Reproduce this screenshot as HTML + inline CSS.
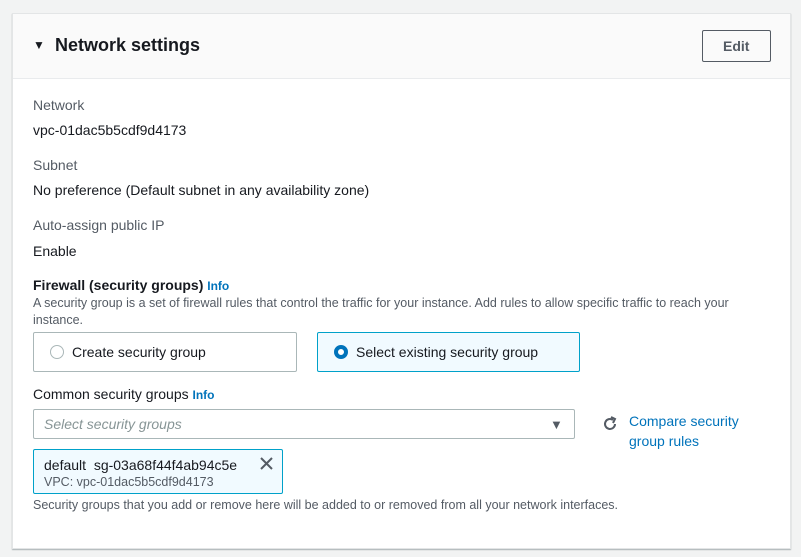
<!DOCTYPE html>
<html><head><style>
body{margin:0;width:801px;height:557px;background:#f2f3f3;font-family:"Liberation Sans",sans-serif;color:#16191f;position:relative;overflow:hidden}
.card{position:absolute;left:12px;top:13px;width:777px;height:534px;background:#fff;border:1px solid #e3e5e6;box-shadow:0 1px 1px rgba(0,28,36,.3)}
.hdr{position:absolute;left:0;top:0;width:777px;height:64px;background:#fafafa;border-bottom:1px solid #e9ebed}
.t{position:absolute;white-space:nowrap;font-size:14px;line-height:16px}
.lbl{color:#545b64}
.s{font-size:12.5px;color:#545b64;line-height:14px}
.info{color:#0073bb;font-weight:bold;font-size:12px}
.box{position:absolute;border:1px solid #aab7b8;border-radius:2px;box-sizing:border-box}
</style></head><body>
<div class="card">
<div class="hdr">
<div class="t" style="left:20px;top:23px;font-size:12px">&#9660;</div>
<div class="t" style="left:42px;top:21px;font-size:18px;font-weight:bold;line-height:20px">Network settings</div>
<div class="box" style="left:689px;top:16px;width:69px;height:32px;border-color:#545b64"></div>
<div class="t" style="left:710px;top:24px;font-weight:bold;color:#545b64">Edit</div>
</div>
</div>
<div class="t lbl" style="left:33px;top:97px">Network</div>
<div class="t" style="left:33px;top:122px">vpc-01dac5b5cdf9d4173</div>
<div class="t lbl" style="left:33px;top:157px">Subnet</div>
<div class="t" style="left:33px;top:182px">No preference (Default subnet in any availability zone)</div>
<div class="t lbl" style="left:33px;top:217px">Auto-assign public IP</div>
<div class="t" style="left:33px;top:243px">Enable</div>
<div class="t" style="left:33px;top:277px;font-weight:bold">Firewall (security groups) <span class="info">Info</span></div>
<div class="t s" style="left:33px;top:296px">A security group is a set of firewall rules that control the traffic for your instance. Add rules to allow specific traffic to reach your</div>
<div class="t s" style="left:33px;top:313px">instance.</div>
<div class="box" style="left:33px;top:332px;width:264px;height:40px"></div>
<div style="position:absolute;left:50px;top:345px;width:12px;height:12px;border:1px solid #aab7b8;border-radius:50%"></div>
<div class="t" style="left:72px;top:344px">Create security group</div>
<div class="box" style="left:317px;top:332px;width:263px;height:40px;border-color:#00a1c9;background:#f1faff"></div>
<div style="position:absolute;left:334px;top:345px;width:6px;height:6px;border:4px solid #0073bb;border-radius:50%;background:#fff"></div>
<div class="t" style="left:356px;top:344px">Select existing security group</div>
<div class="t" style="left:33px;top:386px">Common security groups <span class="info">Info</span></div>
<div class="box" style="left:33px;top:409px;width:542px;height:30px"></div>
<div class="t" style="left:44px;top:416px;font-style:italic;color:#879596">Select security groups</div>
<div class="t" style="left:550px;top:417px;font-size:13px;color:#545b64">&#9660;</div>
<svg style="position:absolute;left:601px;top:415px" width="18" height="18" viewBox="0 0 18 18"><path d="M14 9a5 5 0 1 1-2-4" fill="none" stroke="#545b64" stroke-width="2"/><path d="M10 2l4 2-2 4" fill="none" stroke="#545b64" stroke-width="2"/></svg>
<div class="t" style="left:629px;top:411px;color:#0073bb;line-height:20px">Compare security<br>group rules</div>
<div class="box" style="left:33px;top:449px;width:250px;height:45px;border-color:#00a1c9;background:#f1faff"></div>
<div class="t" style="left:44px;top:457px">default &nbsp;sg-03a68f44f4ab94c5e</div>
<svg style="position:absolute;left:260px;top:457px" width="13" height="13" viewBox="0 0 13 13"><path d="M1 1L12 12M12 1L1 12" stroke="#545b64" stroke-width="2"/></svg>
<div class="t s" style="left:44px;top:475px">VPC: vpc-01dac5b5cdf9d4173</div>
<div class="t s" style="left:33px;top:498px">Security groups that you add or remove here will be added to or removed from all your network interfaces.</div>
</body></html>
